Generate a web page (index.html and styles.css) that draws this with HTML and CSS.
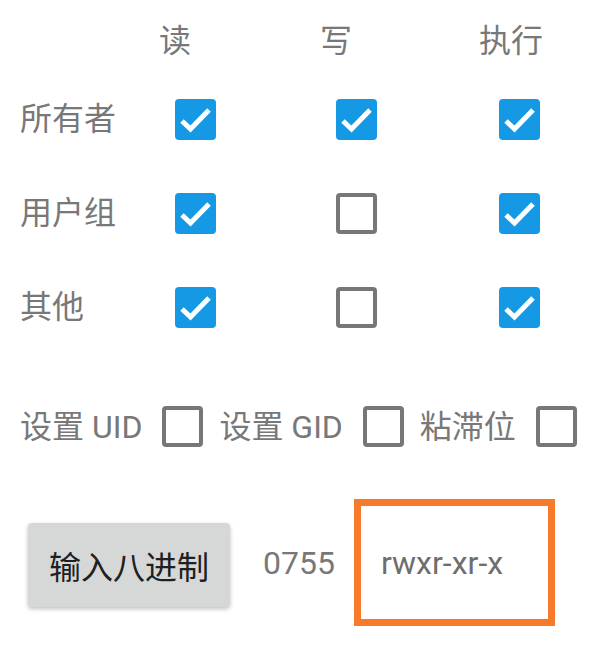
FILE: index.html
```html
<!DOCTYPE html>
<html lang="zh-CN">
<head>
  <meta charset="UTF-8">
  <meta name="viewport" content="width=device-width, initial-scale=1.0">
  <title>权限</title>
  <link rel="stylesheet" href="styles.css">
</head>
<body>
  <div class="perm-grid">
    <span></span>
    <span class="col-head">读</span>
    <span class="col-head">写</span>
    <span class="col-head exec">执行</span>

    <span class="row-label">所有者</span>
    <span class="cb checked"><svg viewBox="0 0 41 41"><polyline points="7,22 15.5,30 34,11"/></svg></span>
    <span class="cb checked"><svg viewBox="0 0 41 41"><polyline points="7,22 15.5,30 34,11"/></svg></span>
    <span class="cb checked"><svg viewBox="0 0 41 41"><polyline points="7,22 15.5,30 34,11"/></svg></span>

    <span class="row-label">用户组</span>
    <span class="cb checked"><svg viewBox="0 0 41 41"><polyline points="7,22 15.5,30 34,11"/></svg></span>
    <span class="cb"></span>
    <span class="cb checked"><svg viewBox="0 0 41 41"><polyline points="7,22 15.5,30 34,11"/></svg></span>

    <span class="row-label">其他</span>
    <span class="cb checked"><svg viewBox="0 0 41 41"><polyline points="7,22 15.5,30 34,11"/></svg></span>
    <span class="cb"></span>
    <span class="cb checked"><svg viewBox="0 0 41 41"><polyline points="7,22 15.5,30 34,11"/></svg></span>
  </div>

  <div class="special-bits">
    <label class="bit">设置 UID <span class="cb"></span></label>
    <label class="bit">设置 GID <span class="cb"></span></label>
    <label class="bit">粘滞位 <span class="cb"></span></label>
  </div>

  <div class="octal-row">
    <button class="octal-button">输入八进制</button>
    <span class="octal-value">0755</span>
    <div class="mode-box">rwxr-xr-x</div>
  </div>
</body>
</html>
```

FILE: styles.css
```css
body {
  margin: 0;
  padding-top: 10px;
  background: #ffffff;
  font-family: Roboto, "Noto Sans CJK SC", sans-serif;
  font-size: 32px;
  line-height: 32px;
  color: #787878;
}

.perm-grid {
  display: grid;
  grid-template-columns: 138px 161px 163px 1fr;
  grid-template-rows: 62px repeat(3, 94px);
  align-items: center;
  padding-left: 20px;
}

.col-head {
  padding-left: 1px;
}

.col-head.exec {
  margin-left: -4px;
}

.perm-grid .cb {
  margin-left: 17px;
}

.cb {
  display: inline-block;
  box-sizing: border-box;
  width: 41px;
  height: 41px;
  border: 4.5px solid #777777;
  border-radius: 4px;
  flex-shrink: 0;
}

.cb.checked {
  border: none;
  background: #1699e4;
}

.cb svg {
  display: block;
  width: 41px;
  height: 41px;
}

.cb polyline {
  fill: none;
  stroke: #ffffff;
  stroke-width: 5;
}

.special-bits {
  display: flex;
  align-items: center;
  gap: 16px;
  margin-top: 52px;
  padding-left: 20px;
}

.bit {
  display: flex;
  align-items: center;
  gap: 20px;
}

.octal-row {
  display: flex;
  align-items: center;
  margin-top: 52px;
  padding-left: 28px;
}

.octal-button {
  width: 202px;
  height: 84px;
  margin-top: 5px;
  border: none;
  border-radius: 4px;
  background: #d6d7d7;
  box-shadow: 0 2px 4px rgba(0, 0, 0, 0.25);
  font-family: inherit;
  font-size: 32px;
  color: #202020;
}

.octal-value {
  margin-left: 33px;
}

.mode-box {
  box-sizing: border-box;
  width: 201px;
  height: 127px;
  margin-left: 19px;
  padding-left: 20px;
  border: 7px solid #f7792b;
  display: flex;
  align-items: center;
  color: #6e6e6e;
}
```
